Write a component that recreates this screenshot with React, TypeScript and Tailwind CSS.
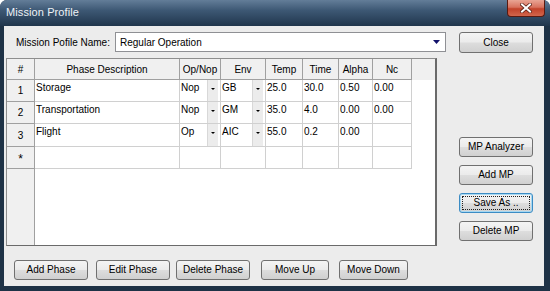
import React from "react";

type Row = {
  n: string;
  desc: string;
  op: string;
  env: string;
  temp: string;
  time: string;
  alpha: string;
  nc: string;
  h: string;
  combo: boolean;
};

const rows: Row[] = [
  { n: "1", desc: "Storage", op: "Nop", env: "GB", temp: "25.0", time: "30.0", alpha: "0.50", nc: "0.00", h: "h-[22px]", combo: true },
  { n: "2", desc: "Transportation", op: "Nop", env: "GM", temp: "35.0", time: "4.0", alpha: "0.00", nc: "0.00", h: "h-[22px]", combo: true },
  { n: "3", desc: "Flight", op: "Op", env: "AIC", temp: "55.0", time: "0.2", alpha: "0.00", nc: "", h: "h-[23px]", combo: true },
  { n: "*", desc: "", op: "", env: "", temp: "", time: "", alpha: "", nc: "", h: "h-[22px]", combo: false },
];

function Btn({ children, className, focus }: { children: React.ReactNode; className: string; focus?: boolean }) {
  return (
    <div
      className={
        "relative flex items-center justify-center rounded-[3px] border text-[10px] leading-none text-black bg-[linear-gradient(#f4f4f4_0%,#ebebeb_48%,#dddddd_52%,#d0d0d0_100%)] " +
        (focus ? "border-[#3c8cc4] shadow-[inset_0_0_0_1px_#a6d8f2] " : "border-[#707070] ") +
        className
      }
    >
      {focus && <div className="absolute inset-[2px] border border-dotted border-[#222]" />}
      <span className="relative">{children}</span>
    </div>
  );
}

function Drop() {
  return (
    <div className="w-[11px] h-full mr-[2px] bg-[#ececec] border-l border-[#d8d8d8] flex justify-center pt-[8px] shrink-0">
      <svg width="4" height="2" viewBox="0 0 4 2">
        <path d="M0 0H4L2 2Z" fill="#000" />
      </svg>
    </div>
  );
}

export default function App() {
  const head = "h-[21px] shrink-0 flex items-center justify-center border-r border-b border-[#a0a0a0] text-[10px] text-black";
  const cell = "h-full shrink-0 border-r border-b border-[#d0d0d0] text-[10px] leading-[12px] text-black pl-[1px] pt-[2px]";
  return (
    <div className="w-[550px] h-[291px] flex flex-col overflow-hidden rounded-t-[7px] bg-[#1e3246] font-['Liberation_Sans',Arial,sans-serif]">
      {/* Title bar */}
      <div className="relative h-[26px] shrink-0 flex items-center pl-[6px] pb-[1px] bg-[linear-gradient(#637d98_0%,#3d5874_40%,#22395280_100%)]">
        <span className="text-[11px] text-[#eef2f6] tracking-[0.1px]">Mission Profile</span>
        <div className="absolute right-[5px] top-0 w-[38px] h-[17px] rounded-b-[4px] border border-t-0 border-[#5a1a10] bg-[linear-gradient(#e9a594_0%,#d8725e_45%,#c2422a_55%,#d2664c_100%)] flex items-center justify-center">
          <svg width="12" height="10" viewBox="0 0 12 10">
            <path d="M2 1.5L10 8.5M10 1.5L2 8.5" stroke="#5b2318" strokeWidth="3.6" strokeLinecap="square" />
            <path d="M2 1.5L10 8.5M10 1.5L2 8.5" stroke="#ffffff" strokeWidth="2" strokeLinecap="square" />
          </svg>
        </div>
      </div>

      {/* Body */}
      <div className="flex-1 ml-[4px] mr-[6px] mb-[5px] bg-[#ececec] flex flex-col">
        {/* Top row */}
        <div className="mt-[6px] flex items-start h-[21px] shrink-0">
          <div className="ml-[12px] w-[99px] h-[20px] flex items-center text-[10px] text-black">Mission Pofile Name:</div>
          <div className="w-[331px] h-[20px] border border-[#8f9094] bg-white flex items-center pl-[4px] pr-[5px] text-[10px] text-black">
            <span className="flex-1">Regular Operation</span>
            <svg width="7" height="4" viewBox="0 0 7 4">
              <path d="M0 0H7L3.5 4Z" fill="#12126b" />
            </svg>
          </div>
          <Btn className="ml-[13px] w-[74px] h-[21px]">Close</Btn>
        </div>

        {/* Main row */}
        <div className="mt-[5px] flex h-[188px] shrink-0">
          <div className="ml-[2px] w-[431px] h-[188px] border border-[#8e8e8e] border-r-[2px] border-r-[#6a6a6a] border-b-[#6a6a6a] bg-white flex">
            {/* Row header column */}
            <div className="w-[28px] shrink-0 bg-[#f0f0f0] flex flex-col">
              <div className={head + " w-[28px]"}>#</div>
              {rows.map((r) => (
                <div
                  key={r.n}
                  className={r.h + " w-[28px] shrink-0 flex items-center justify-center border-r border-b border-[#a0a0a0] text-[10px] text-black"}
                >
                  {r.n === "*" ? <span className="text-[12px] leading-none pt-[2px]">*</span> : r.n}
                </div>
              ))}
              <div className="flex-1 border-r border-[#a0a0a0]" />
            </div>
            {/* Data columns */}
            <div className="flex-1 flex flex-col">
              <div className="flex bg-[#f0f0f0] h-[21px] shrink-0">
                <div className={head + " w-[145px]"}>Phase Description</div>
                <div className={head + " w-[41px]"}>Op/Nop</div>
                <div className={head + " w-[45px]"}>Env</div>
                <div className={head + " w-[37px]"}>Temp</div>
                <div className={head + " w-[36px]"}>Time</div>
                <div className={head + " w-[34px]"}>Alpha</div>
                <div className={head + " w-[39px]"}>Nc</div>
                <div className="flex-1" />
              </div>
              {rows.map((r) => (
                <div key={r.n} className={r.h + " flex shrink-0"}>
                  <div className={cell + " w-[145px]"}>{r.desc}</div>
                  <div className={"h-full shrink-0 w-[41px] border-r border-b border-[#d0d0d0] flex text-[10px] leading-[12px] text-black"}>
                    <span className="flex-1 pl-[1px] pt-[2px]">{r.op}</span>
                    {r.combo && <Drop />}
                  </div>
                  <div className={"h-full shrink-0 w-[45px] border-r border-b border-[#d0d0d0] flex text-[10px] leading-[12px] text-black"}>
                    <span className="flex-1 pl-[1px] pt-[2px]">{r.env}</span>
                    {r.combo && <Drop />}
                  </div>
                  <div className={cell + " w-[37px]"}>{r.temp}</div>
                  <div className={cell + " w-[36px]"}>{r.time}</div>
                  <div className={cell + " w-[34px]"}>{r.alpha}</div>
                  <div className={cell + " w-[39px]"}>{r.nc}</div>
                  <div className="flex-1" />
                </div>
              ))}
            </div>
          </div>

          {/* Right buttons */}
          <div className="ml-[22px] flex flex-col justify-end gap-[8px] pb-[5px]">
            <Btn className="w-[74px] h-[20px]">MP Analyzer</Btn>
            <Btn className="w-[74px] h-[20px]">Add MP</Btn>
            <Btn className="w-[74px] h-[20px]" focus>
              Save As ..
            </Btn>
            <Btn className="w-[74px] h-[20px]">Delete MP</Btn>
          </div>
        </div>

        {/* Bottom row */}
        <div className="mt-[14px] flex h-[20px] shrink-0">
          <Btn className="ml-[10px] w-[74px] h-[20px]">Add Phase</Btn>
          <Btn className="ml-[8px] w-[74px] h-[20px]">Edit Phase</Btn>
          <Btn className="ml-[6px] w-[74px] h-[20px]">Delete Phase</Btn>
          <Btn className="ml-[11px] w-[68px] h-[20px]">Move Up</Btn>
          <Btn className="ml-[10px] w-[69px] h-[20px]">Move Down</Btn>
        </div>
      </div>
    </div>
  );
}
